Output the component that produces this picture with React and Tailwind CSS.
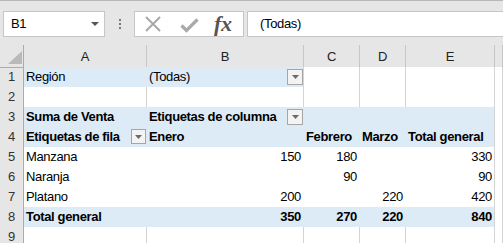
import React from 'react'

const COLS = 'grid grid-cols-[24px_123px_157px_56px_46px_89px_1fr]'

// cell presets
const grid = 'bg-white border-r border-b border-r-[#d4d4d4] border-b-[#d4d4d4]'
const blueIn = 'bg-[#ddebf7] border-r border-b border-r-[#ddebf7] border-b-[#ddebf7]'
const blueEnd = 'bg-[#ddebf7] border-r border-b border-r-[#d4d4d4] border-b-[#ddebf7]'
const blueHdIn = 'bg-[#ddebf7] border-r border-b border-r-[#ddebf7] border-b-[#9bc2e6]'
const blueHdEnd = 'bg-[#ddebf7] border-r border-b border-r-[#d4d4d4] border-b-[#9bc2e6]'
const whiteIn = 'bg-white border-r border-b border-r-white border-b-white'
const whiteEnd = 'bg-white border-r border-b border-r-[#d4d4d4] border-b-white'
const whiteLastIn = 'bg-white border-r border-b border-r-white border-b-[#9bc2e6]'
const whiteLastEnd = 'bg-white border-r border-b border-r-[#d4d4d4] border-b-[#9bc2e6]'

const rows = [
  [
    { t: 'Región', c: 'bg-[#ddebf7] border-r border-b border-r-[#ddebf7] border-b-[#b4cde6]' },
    { t: '(Todas)', dd: true, c: 'bg-[#ddebf7] border-r border-b border-r-[#d4d4d4] border-b-[#b4cde6]' },
    { c: grid }, { c: grid }, { c: grid }, { c: grid },
  ],
  [{ c: grid }, { c: grid }, { c: grid }, { c: grid }, { c: grid }, { c: grid }],
  [
    { t: 'Suma de Venta', b: true, c: blueIn },
    { t: 'Etiquetas de columna', b: true, dd: true, c: blueIn },
    { c: blueIn }, { c: blueIn }, { c: blueEnd }, { c: grid },
  ],
  [
    { t: 'Etiquetas de fila', b: true, dd: 'small', c: blueHdIn },
    { t: 'Enero', b: true, c: blueHdIn },
    { t: 'Febrero', b: true, c: blueHdIn },
    { t: 'Marzo', b: true, c: blueHdIn },
    { t: 'Total general', b: true, c: blueHdEnd },
    { c: grid },
  ],
  [
    { t: 'Manzana', c: whiteIn },
    { t: '150', r: true, c: whiteIn },
    { t: '180', r: true, c: whiteIn },
    { c: whiteIn },
    { t: '330', r: true, c: whiteEnd },
    { c: grid },
  ],
  [
    { t: 'Naranja', c: whiteIn },
    { c: whiteIn },
    { t: '90', r: true, c: whiteIn },
    { c: whiteIn },
    { t: '90', r: true, c: whiteEnd },
    { c: grid },
  ],
  [
    { t: 'Platano', c: whiteLastIn },
    { t: '200', r: true, c: whiteLastIn },
    { c: whiteLastIn },
    { t: '220', r: true, c: whiteLastIn },
    { t: '420', r: true, c: whiteLastEnd },
    { c: grid },
  ],
  [
    { t: 'Total general', b: true, c: blueIn },
    { t: '350', b: true, r: true, c: blueIn },
    { t: '270', b: true, r: true, c: blueIn },
    { t: '220', b: true, r: true, c: blueIn },
    { t: '840', b: true, r: true, c: blueEnd },
    { c: grid },
  ],
  [{ c: grid }, { c: grid }, { c: grid }, { c: grid }, { c: grid }, { c: grid }],
]

const Dropdown = ({ small }) => (
  <span
    className={`ml-auto flex shrink-0 items-center justify-center border border-[#a6a6a6] bg-[#f3f3f3] ${
      small ? 'h-[15px] w-[15px]' : 'h-[16px] w-[16px]'
    }`}
  >
    <svg width="7" height="4" viewBox="0 0 7 4">
      <path d="M0 0h7L3.5 4z" fill="#6b6b6b" />
    </svg>
  </span>
)

const Toolbar = () => (
  <div className="flex h-[45px] items-start border-t border-t-[#b8b8b8] bg-[#e6e6e6] pt-[10px]">
    {/* name box */}
    <div className="ml-[3px] flex h-[26px] w-[102px] items-center border border-[#c6c6c6] bg-white pl-[7px] pr-[5px] text-[13px] text-black">
      <span>B1</span>
      <svg className="ml-auto" width="8" height="4" viewBox="0 0 8 4">
        <path d="M0 0h8L4 4z" fill="#555" />
      </svg>
    </div>
    <div className="ml-[14px] flex h-[26px] flex-col justify-center gap-[2px]">
      <span className="h-[2px] w-[2px] bg-[#777]" />
      <span className="h-[2px] w-[2px] bg-[#777]" />
      <span className="h-[2px] w-[2px] bg-[#777]" />
    </div>
    {/* cancel / enter / fx */}
    <div className="ml-[13px] flex h-[26px] w-[110px] items-center border border-[#c6c6c6] bg-white">
      <svg className="ml-[10px]" width="16" height="16" viewBox="0 0 16 16">
        <path d="M1 1L15 15M15 1L1 15" stroke="#a9a9a9" strokeWidth="2" fill="none" />
      </svg>
      <svg className="ml-[19px] mt-[2px]" width="19" height="15" viewBox="0 0 19 15">
        <path d="M1.5 7.5L6.5 12.5L17.5 1.5" stroke="#a9a9a9" strokeWidth="3.2" fill="none" />
      </svg>
      <span className="ml-[15px] font-['Liberation_Serif',serif] text-[22px] font-bold italic leading-none text-[#555]">
        fx
      </span>
    </div>
    <div className="ml-[3px] flex h-[26px] flex-1 items-center border border-r-0 border-[#c6c6c6] bg-white pl-[12px] text-[13px] text-black">
      (Todas)
    </div>
  </div>
)

export default function App() {
  return (
    <div className="h-[243px] w-[503px] overflow-hidden bg-white font-['Liberation_Sans',Arial,sans-serif] text-[13px] tracking-[-0.35px] text-black">
      <Toolbar />
      {/* column headers */}
      <div className={`${COLS} h-[22px] bg-[#e6e6e6] text-[13px] text-[#222]`}>
        <div className="relative border-r border-b border-r-[#ababab] border-b-[#ababab]">
          <svg className="absolute bottom-[3px] right-[1px]" width="14" height="13" viewBox="0 0 14 13">
            <path d="M14 0V13H0z" fill="#b9b9b9" />
          </svg>
        </div>
        {['A', 'B', 'C', 'D', 'E', ''].map((l, i) => (
          <div
            key={i}
            className="flex items-center justify-center border-r border-b border-r-[#c6c6c6] border-b-[#ababab] pt-[2px]"
          >
            {l}
          </div>
        ))}
      </div>
      {rows.map((cells, ri) => (
        <div key={ri} className={`${COLS} h-[20px]`}>
          <div className="flex items-center justify-center border-r border-b border-r-[#ababab] border-b-[#d0d0d0] bg-[#e6e6e6] text-[13px] text-[#333]">
            {ri + 1}
          </div>
          {cells.map((cell, ci) => (
            <div
              key={ci}
              className={`flex min-w-0 items-center whitespace-nowrap ${cell.r ? 'justify-end pr-[2px]' : 'pl-[2px]'} ${cell.b ? 'font-bold' : ''} ${cell.c}`}
            >
              {cell.t && <span>{cell.t}</span>}
              {cell.dd && <Dropdown small={cell.dd === 'small'} />}
            </div>
          ))}
        </div>
      ))}
    </div>
  )
}
